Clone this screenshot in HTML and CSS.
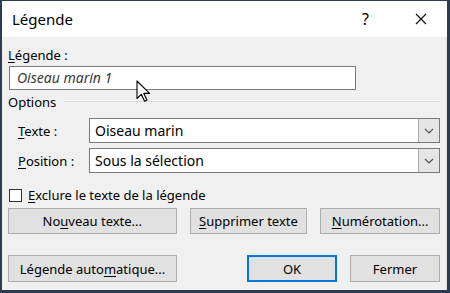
FILE: index.html
```html
<!DOCTYPE html>
<html lang="fr">
<head>
<meta charset="utf-8">
<link rel="stylesheet" href="styles.css">
</head>
<body>
<div class="window">
  <div class="titlebar">
    <span class="title">Légende</span>
    <span class="help">?</span>
    <svg class="close" width="12" height="12" viewBox="0 0 12 12"><path d="M1 1L11 11M11 1L1 11" stroke="#111" stroke-width="1.2"/></svg>
  </div>
  <div class="content">
    <div class="lbl-caption"><u>L</u>égende :</div>
    <div class="textbox">Oiseau marin 1</div>
    <div class="group"><span>Options</span><div class="group-line"></div></div>
    <div class="field">
      <div class="field-label"><u>T</u>exte :</div>
      <div class="select"><span class="select-value">Oiseau marin</span><span class="select-btn"><svg width="10" height="6" viewBox="0 0 10 6"><path d="M1 1L5 5L9 1" fill="none" stroke="#555" stroke-width="1.2"/></svg></span></div>
    </div>
    <div class="field field-second">
      <div class="field-label"><u>P</u>osition :</div>
      <div class="select"><span class="select-value">Sous la sélection</span><span class="select-btn"><svg width="10" height="6" viewBox="0 0 10 6"><path d="M1 1L5 5L9 1" fill="none" stroke="#555" stroke-width="1.2"/></svg></span></div>
    </div>
    <div class="check-row"><span class="checkbox"></span><span><u>E</u>xclure le texte de la légende</span></div>
    <div class="btn-row row1">
      <div class="btn btn-wide">No<u>u</u>veau texte...</div>
      <div class="btn btn-mid"><u>S</u>upprimer texte</div>
      <div class="btn btn-num"><u>N</u>umérotation...</div>
    </div>
    <div class="btn-row row2">
      <div class="btn btn-wide">Légende auto<u>m</u>atique...</div>
      <div class="spacer"></div>
      <div class="btn btn-small btn-default">OK</div>
      <div class="btn btn-small">Fermer</div>
    </div>
  </div>
  <svg class="cursor" width="16" height="24" viewBox="0 0 16 24"><path d="M1 1L1 18.5L5.3 14.3L8.6 21.2L11 20.1L7.8 13.4L13.6 13.4Z" fill="#fff" stroke="#000" stroke-width="1.1" stroke-linejoin="round"/></svg>
</div>
</body>
</html>
```
FILE: styles.css
```css
* { box-sizing: border-box; }
html, body { margin: 0; padding: 0; }
body {
  font-family: "Noto Sans", "Open Sans", sans-serif;
  font-size: 13px;
  color: #000;
  background: #fff;
}
u { text-decoration: underline; text-underline-offset: 2px; }
.window {
  position: relative;
  width: 450px;
  height: 293px;
  background: #f0f0f0;
  border-style: solid;
  border-color: #2c3a52;
  border-width: 1px 3px 3px 2px;
  display: flex;
  flex-direction: column;
}
.titlebar {
  height: 36px;
  background: #fff;
  display: flex;
  align-items: center;
  padding-left: 10px;
  flex-shrink: 0;
}
.title { font-size: 15px; flex: 1; }
.help { font-size: 16px; margin-right: 46px; }
.close { margin-right: 20px; }
.content {
  flex: 1;
  display: flex;
  flex-direction: column;
  padding: 0 6px;
  border-right: 1px solid #e2e2e2;
}
.lbl-caption { line-height: 16px; margin-top: 10px; }
.textbox {
  margin-top: 3px;
  margin-left: 1px;
  width: 347px;
  height: 24px;
  background: #fff;
  border: 1px solid #7a7a7a;
  font-style: italic;
  font-size: 14px;
  color: #3a3a3a;
  padding-left: 7px;
  line-height: 22px;
}
.group {
  margin-top: 4px;
  display: flex;
  align-items: center;
  line-height: 16px;
}
.group-line { flex: 1; height: 1px; background: #dcdcdc; margin-left: 8px; margin-top: -2px; }
.field {
  margin-top: 8px;
  display: flex;
  align-items: center;
  height: 25px;
}
.field-second { margin-top: 5px; }
.field-label { width: 81px; padding-left: 10px; }
.select {
  flex: 1;
  height: 25px;
  background: #fff;
  border: 1px solid #7a7a7a;
  display: flex;
  align-items: stretch;
}
.select-value { flex: 1; padding-left: 5px; line-height: 23px; font-size: 14px; }
.select-btn {
  width: 21px;
  background: #e5e5e5;
  border-left: 1px solid #adadad;
  display: flex;
  align-items: center;
  justify-content: center;
}
.check-row {
  margin-top: 14px;
  display: flex;
  align-items: center;
  line-height: 16px;
}
.checkbox {
  width: 13px;
  height: 13px;
  border: 1px solid #333;
  background: #fff;
  margin: 0 6px 0 1px;
}
.btn-row { display: flex; gap: 13px; }
.row1 { margin-top: 5px; }
.row2 { margin-top: 21px; }
.spacer { flex: 1; }
.btn {
  height: 26px;
  background: #e1e1e1;
  border: 1px solid #adadad;
  display: flex;
  align-items: center;
  justify-content: center;
}
.btn-wide { width: 169px; }
.btn-mid { width: 118px; }
.btn-num { width: 120px; }
.btn-small { width: 90px; }
.row2 .btn { height: 27px; }
.btn-default { border: 2px solid #0078d7; }
.cursor { position: absolute; left: 134px; top: 79px; }
```
